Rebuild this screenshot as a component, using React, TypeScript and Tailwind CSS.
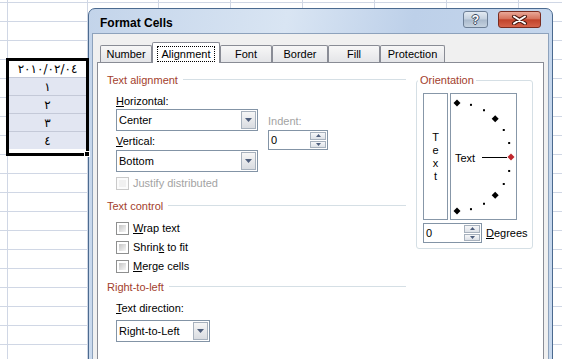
import React from 'react';

const sheetCols = 9;
const sheetRows = 20;

function Arrow({ dir, small }: { dir: 'up' | 'down'; small?: boolean }) {
  const w = small ? 5 : 7;
  const h = small ? 3 : 4;
  const d = dir === 'down' ? `M0 0H${w}L${w / 2} ${h}Z` : `M0 ${h}H${w}L${w / 2} 0Z`;
  return (
    <svg width={w} height={h} viewBox={`0 0 ${w} ${h}`}>
      <path d={d} fill="#4e5e7c" />
    </svg>
  );
}

function GroupHeader({ title, className = '' }: { title: string; className?: string }) {
  return (
    <div className={`flex h-[13px] items-center ${className}`}>
      <span className="leading-[13px] text-[#a3412d]">{title}</span>
      <span className="mb-[2px] ml-[5px] h-px flex-1 bg-[#d5dfe5]" />
    </div>
  );
}

function Combo({ value, className }: { value: string; className: string }) {
  return (
    <div className={`flex h-[22px] border border-[#8394a6] bg-white ${className}`}>
      <span className="flex-1 self-center pl-[2px] leading-[13px]">{value}</span>
      <span className="my-px mr-px flex w-[15px] items-center justify-center border border-[#a7b1bd] bg-[linear-gradient(#f6f6f6,#d9dce1)]">
        <Arrow dir="down" />
      </span>
    </div>
  );
}

function Spin({ className }: { className: string }) {
  return (
    <div className={`flex h-[20px] border border-[#8394a6] bg-white ${className}`}>
      <span className="flex-1 self-center pl-[2px] leading-[13px]">0</span>
      <div className="my-px mr-px flex w-[16px] flex-col gap-px">
        <span className="flex flex-1 items-center justify-center border border-[#a7b1bd] bg-[linear-gradient(#f6f7f9,#dde1e7)]">
          <Arrow dir="up" small />
        </span>
        <span className="flex flex-1 items-center justify-center border border-[#a7b1bd] bg-[linear-gradient(#f6f7f9,#dde1e7)]">
          <Arrow dir="down" small />
        </span>
      </div>
    </div>
  );
}

function Check({
  children,
  disabled,
  className = '',
}: {
  children: React.ReactNode;
  disabled?: boolean;
  className?: string;
}) {
  return (
    <div className={`ml-[9px] flex h-[13px] items-center ${className}`}>
      <span
        className={`h-[13px] w-[13px] border p-[2px] ${
          disabled ? 'border-[#cacaca] bg-[#fbfbfb]' : 'border-[#8e8f8f] bg-white'
        }`}
      >
        <span
          className={`block h-full w-full ${
            disabled ? 'bg-[#f0f0f0]' : 'bg-[linear-gradient(135deg,#c6c6c6,#f6f6f6)]'
          }`}
        />
      </span>
      <span className={`ml-[4px] leading-[13px] ${disabled ? 'text-[#a3a3a3]' : ''}`}>{children}</span>
    </div>
  );
}

function Dial() {
  const cx = 6;
  const cy = 63;
  const r = 54;
  const marks = [];
  for (let a = -90; a <= 90; a += 15) {
    const rad = (a * Math.PI) / 180;
    const x = cx + r * Math.cos(rad);
    const y = cy - r * Math.sin(rad);
    if (a % 45 === 0) {
      const s = 3.5;
      marks.push(
        <polygon
          key={a}
          points={`${x},${y - s} ${x + s},${y} ${x},${y + s} ${x - s},${y}`}
          fill={a === 0 ? '#c0272d' : '#000'}
        />
      );
    } else {
      marks.push(<rect key={a} x={x - 1} y={y - 1} width="2" height="2" fill="#000" />);
    }
  }
  return (
    <svg width="65" height="125" viewBox="0 0 65 125">
      <text x="4" y="68" fontFamily="'Liberation Sans', Arial, sans-serif" fontSize="11" fill="#000">
        Text
      </text>
      <line x1="31" y1="63.5" x2="56" y2="63.5" stroke="#000" strokeWidth="1" />
      {marks}
    </svg>
  );
}

function Sheet() {
  const cells = [];
  for (let r = 0; r < sheetRows; r++) {
    for (let c = 0; c < sheetCols; c++) {
      if (c === 1 && r >= 4 && r <= 8) continue;
      cells.push(<div key={`${r}-${c}`} className="border-b border-r border-[#d0d7e5]" />);
    }
  }
  return (
    <div className="grid grid-cols-[8px_80px_71px_72px_72px_72px_72px_72px_72px] grid-rows-[3px_repeat(19,19px)]">
      <div className="relative z-10 col-start-2 row-span-5 row-start-5 -mb-px -ml-[2px] -mr-px -mt-[2px] flex flex-col border-[3px] border-black font-['DejaVu_Sans',sans-serif] text-[12px] leading-none">
        <div className="flex h-[17px] items-center justify-center border-b border-[#c4c9d8] bg-white">٢٠١٠/٠٢/٠٤</div>
        <div className="flex h-[18px] items-center justify-center border-b border-[#c4c9d8] bg-[#e2e6f2]">١</div>
        <div className="flex h-[18px] items-center justify-center border-b border-[#c4c9d8] bg-[#e2e6f2]">٢</div>
        <div className="flex h-[18px] items-center justify-center border-b border-[#c4c9d8] bg-[#e2e6f2]">٣</div>
        <div className="flex h-[17px] items-center justify-center bg-[#e2e6f2]">٤</div>
        <span className="absolute -bottom-[4px] -right-[4px] h-[6px] w-[6px] border border-white bg-black" />
      </div>
      {cells}
    </div>
  );
}

const tabs = [
  { label: 'Number', w: 'w-[52px]' },
  { label: 'Alignment', w: 'w-[68px]', active: true },
  { label: 'Font', w: 'w-[52px]' },
  { label: 'Border', w: 'w-[56px]' },
  { label: 'Fill', w: 'w-[52px]' },
  { label: 'Protection', w: 'w-[65px]' },
];

function Dialog() {
  return (
    <div className="absolute left-[88px] top-[8px] flex h-[360px] w-[465px] flex-col rounded-t-[7px] border border-[#4b6a8f] bg-[linear-gradient(100deg,#c3d4ea_0%,#d9e5f3_38%,#bdd0e9_62%,#c8d9ee_100%)] px-[3px]">
      {/* title bar */}
      <div className="flex h-[24px] shrink-0 items-start pl-[8px] pr-[8px]">
        <span className="mt-[7px] text-[12px] font-bold leading-[15px] text-black">Format Cells</span>
        <div className="ml-auto mt-[2px] flex gap-[10px]">
          <span className="flex h-[17px] w-[25px] items-center justify-center rounded-[3px] border border-[#6d7f96] bg-[linear-gradient(#e3eaf2_0%,#c3d0de_48%,#a9b9cc_52%,#c5d2e0_100%)] text-[12px] font-bold leading-none text-white [text-shadow:1px_0_#3a4a60,-1px_0_#3a4a60,0_1px_#3a4a60,0_-1px_#3a4a60]">
            ?
          </span>
          <span className="flex h-[17px] w-[43px] items-center justify-center rounded-[3px] border border-[#7a2c20] bg-[linear-gradient(#e9a898_0%,#d6735d_45%,#c1432b_52%,#d5634a_100%)]">
            <svg width="17" height="10" viewBox="0 0 17 10">
              <path d="M3 1.5L14 8.5M14 1.5L3 8.5" stroke="#4a1a12" strokeWidth="4" strokeLinecap="round" />
              <path d="M3 1.5L14 8.5M14 1.5L3 8.5" stroke="#fff" strokeWidth="2" strokeLinecap="round" />
            </svg>
          </span>
        </div>
      </div>

      {/* client */}
      <div className="flex flex-1 flex-col border border-[#8da2bc] bg-[#f0f0f0] px-[4px] pt-[8px]">
        <div className="relative z-10 -mb-px flex h-[21px] items-end pl-[3px]">
          {tabs.map((t) =>
            t.active ? (
              <div
                key={t.label}
                className={`flex h-[21px] ${t.w} items-start justify-center rounded-t-[2px] border-l border-r border-t border-[#898c95] bg-white pt-[3px]`}
              >
                <span className="flex h-[16px] w-[58px] items-center justify-center border border-dotted border-black leading-[13px]">
                  {t.label}
                </span>
              </div>
            ) : (
              <div
                key={t.label}
                className={`mb-px flex h-[17px] ${t.w} items-center justify-center rounded-t-[2px] border-l border-r border-t border-[#898c95] bg-[linear-gradient(#f7f7f7,#e4e5e8)] leading-[13px]`}
              >
                {t.label}
              </div>
            )
          )}
        </div>

        {/* tab panel */}
        <div className="flex flex-1 items-start border border-[#898c95] bg-white pl-[9px] pt-[11px]">
          <div className="flex w-[299px] flex-col">
            <GroupHeader title="Text alignment" />
            <div className="mt-[8px] flex pl-[9px]">
              <div className="flex w-[142px] flex-col">
                <span className="leading-[13px]">
                  <u>H</u>orizontal:
                </span>
                <Combo value="Center" className="mt-px" />
                <span className="mt-[4px] leading-[13px]">
                  <u>V</u>ertical:
                </span>
                <Combo value="Bottom" className="mt-[2px]" />
              </div>
              <div className="ml-[10px] flex flex-col">
                <span className="mt-[20px] leading-[13px] text-[#a3a3a3]">Indent:</span>
                <Spin className="mt-[2px] w-[60px]" />
              </div>
            </div>
            <Check disabled className="mt-[5px]">
              Justify distributed
            </Check>

            <GroupHeader title="Text control" className="mt-[10px]" />
            <Check className="mt-[9px]">
              <u>W</u>rap text
            </Check>
            <Check className="mt-[6px]">
              Shrin<u>k</u> to fit
            </Check>
            <Check className="mt-[6px]">
              <u>M</u>erge cells
            </Check>

            <GroupHeader title="Right-to-left" className="mt-[8px]" />
            <span className="ml-[9px] mt-[8px] leading-[13px]">
              <u>T</u>ext direction:
            </span>
            <Combo value="Right-to-Left" className="ml-[9px] mt-[5px] w-[94px]" />
          </div>

          <fieldset className="ml-[10px] w-[117px] rounded-[3px] border border-[#d5dfe5] pb-[5px]">
            <legend className="ml-[1px] px-[2px] leading-[13px] text-[#a3412d]">Orientation</legend>
            <div className="mt-[6px] flex flex-col pl-[6px]">
              <div className="flex h-[127px] gap-[2px]">
                <div className="flex w-[25px] flex-col items-center justify-center border border-[#8797a8] leading-[13px]">
                  <span>T</span>
                  <span>e</span>
                  <span>x</span>
                  <span>t</span>
                </div>
                <div className="w-[67px] border border-[#8797a8]">
                  <Dial />
                </div>
              </div>
              <div className="mt-[3px] flex items-center">
                <Spin className="w-[59px]" />
                <span className="ml-[4px] leading-[13px]">
                  <u>D</u>egrees
                </span>
              </div>
            </div>
          </fieldset>
        </div>
      </div>
    </div>
  );
}

export default function App() {
  return (
    <div className="relative h-[359px] w-[562px] overflow-hidden bg-white font-['Liberation_Sans',Arial,sans-serif] text-[11px] text-black">
      <Sheet />
      <Dialog />
    </div>
  );
}
